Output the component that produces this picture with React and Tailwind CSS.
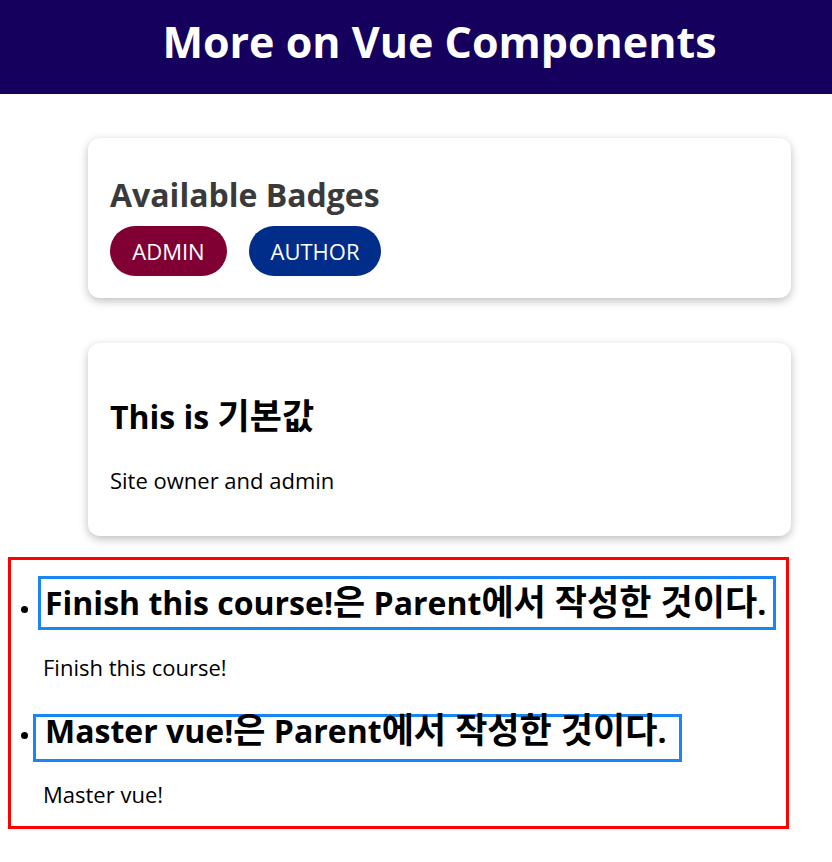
import React from 'react';

const font = "font-['Open_Sans','Noto_Sans_CJK_KR',sans-serif]";

// Hangul runs are set a little larger so they match the reference's Korean glyphs
const Ko = ({ children }) => <span className="text-[35px] leading-[0]">{children}</span>;

const Badge = ({ label, color, width }) => (
  <span
    className={`flex h-[50px] items-center justify-center rounded-full text-[22px] leading-[30px] text-white ${color} ${width}`}
  >
    {label}
  </span>
);

const App = () => {
  return (
    <div className={`min-h-screen bg-white text-black ${font}`}>
      {/* header */}
      <header className="flex h-[94px] w-full justify-center bg-[#15005e] pl-[47px] pt-[20px]">
        <h1 className="text-[43px] font-bold leading-none text-white">More on Vue Components</h1>
      </header>

      {/* badges card */}
      <section className="ml-[88px] mt-[44px] h-[160px] w-[703px] rounded-[12px] bg-white px-[22px] pt-[37px] shadow-[0_3px_10px_rgba(0,0,0,0.26)]">
        <h2 className="text-[32px] font-bold leading-[40px] text-[#3a3a3a]">Available Badges</h2>
        <div className="mt-[11px] flex gap-[22px]">
          <Badge label="ADMIN" color="bg-[#800033]" width="w-[117px]" />
          <Badge label="AUTHOR" color="bg-[#002d8a]" width="w-[132px]" />
        </div>
      </section>

      {/* user card */}
      <section className="ml-[88px] mt-[45px] h-[193px] w-[703px] rounded-[12px] bg-white px-[22px] pt-[54px] shadow-[0_3px_10px_rgba(0,0,0,0.26)]">
        <h2 className="text-[32px] font-bold leading-[40px]">
          This is <Ko>기본값</Ko>
        </h2>
        <p className="mt-[28px] text-[22px] leading-[30px]">Site owner and admin</p>
      </section>

      {/* goals list */}
      <ul className="ml-[8px] mt-[21px] h-[272px] w-[781px] border-[3px] border-[#ff0000]">
        <li className="mt-[16px]">
          <div className="flex items-start">
            <span className="ml-[10px] mt-[30px] h-[7px] w-[7px] rounded-full bg-black" />
            <h2 className="ml-[10px] h-[54px] w-[738px] border-[3px] border-[#1a86f5] pl-[4px] text-[32px] font-bold leading-[48px] whitespace-nowrap">
              Finish this course!<Ko>은</Ko> Parent<Ko>에서 작성한 것이다</Ko>.
            </h2>
          </div>
          <p className="ml-[32px] mt-[22px] text-[22px] leading-[30px]">Finish this course!</p>
        </li>
        <li className="mt-[32px]">
          <div className="flex items-start">
            <span className="ml-[10px] mt-[18px] h-[7px] w-[7px] rounded-full bg-black" />
            <h2 className="ml-[5px] h-[48px] w-[649px] border-[3px] border-[#1a86f5] pl-[9px] text-[32px] font-bold leading-[28px] whitespace-nowrap">
              Master vue!<Ko>은</Ko> Parent<Ko>에서 작성한 것이다</Ko>.
            </h2>
          </div>
          <p className="ml-[32px] mt-[17px] text-[22px] leading-[30px]">Master vue!</p>
        </li>
      </ul>
    </div>
  );
};

export default App;
